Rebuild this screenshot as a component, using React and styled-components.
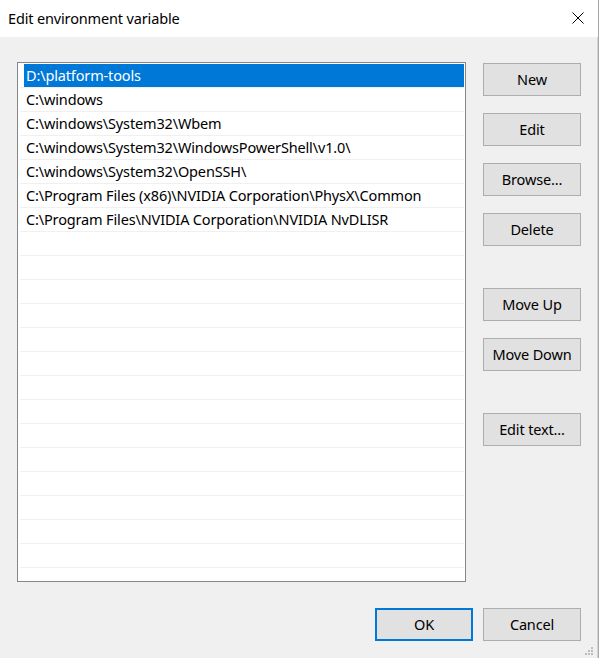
import React from 'react'
import styled, { createGlobalStyle } from 'styled-components'

const GlobalStyle = createGlobalStyle`
  html, body {
    margin: 0;
    padding: 0;
    background: #f0f0f0;
  }
  * { box-sizing: border-box; }
`

const Window = styled.div`
  position: relative;
  width: 599px;
  height: 658px;
  display: flex;
  flex-direction: column;
  background: #f0f0f0;
  border-right: 1px solid #a8a8a8;
  box-shadow: inset -1px 0 0 #d4d4d4;
  font-family: "Noto Sans", "Open Sans", sans-serif;
  font-size: 14.5px;
  letter-spacing: -0.15px;
  color: #000;
`

const TitleBar = styled.div`
  height: 37px;
  flex: none;
  display: flex;
  align-items: center;
  justify-content: space-between;
  background: #fff;
  padding: 0 14px 0 8px;
`

const Title = styled.span`
  margin-top: -2px;
`

const CloseIcon = styled.svg`
  width: 12px;
  height: 12px;
  margin-top: -1px;
`

const Body = styled.div`
  flex: 1;
  display: flex;
  flex-direction: column;
  padding: 25px 17px 18px 17px;
`

const Main = styled.div`
  display: flex;
  gap: 17px;
`

const List = styled.div`
  width: 449px;
  height: 520px;
  flex: none;
  background: #fff;
  border: 1px solid #828790;
  padding: 1px 1px 0 2px;
  overflow: hidden;
`

const Row = styled.div`
  height: 24px;
  border-bottom: 1px solid #f0f0f0;
  padding-left: 4px;
  display: flex;
`

const Cell = styled.div`
  flex: 1;
  height: 23px;
  line-height: 23px;
  padding-left: 2px;
  white-space: nowrap;
  background: ${p => (p.$selected ? '#0078d7' : 'transparent')};
  color: ${p => (p.$selected ? '#fff' : '#000')};
`

const Side = styled.div`
  display: flex;
  flex-direction: column;
  padding-top: 1px;
`

const Group = styled.div`
  display: flex;
  flex-direction: column;
  gap: 17px;
  margin-bottom: ${p => p.$after || 0}px;
`

const Button = styled.button`
  width: 98px;
  height: 33px;
  padding: 0;
  background: #e1e1e1;
  border: ${p => (p.$default ? '2px solid #0078d7' : '1px solid #adadad')};
  font-family: inherit;
  font-size: 14.5px;
  letter-spacing: -0.15px;
  color: #000;
  line-height: 1;
`

const Footer = styled.div`
  margin-top: 26px;
  display: flex;
  justify-content: flex-end;
  gap: 10px;
`

const Grip = styled.svg`
  position: absolute;
  right: 5px;
  bottom: 3px;
  width: 8px;
  height: 8px;
`

const paths = [
  'D:\\platform-tools',
  'C:\\windows',
  'C:\\windows\\System32\\Wbem',
  'C:\\windows\\System32\\WindowsPowerShell\\v1.0\\',
  'C:\\windows\\System32\\OpenSSH\\',
  'C:\\Program Files (x86)\\NVIDIA Corporation\\PhysX\\Common',
  'C:\\Program Files\\NVIDIA Corporation\\NVIDIA NvDLISR',
]

const rows = Array.from({ length: 22 }, (_, i) => paths[i] || '')

export default function App() {
  return (
    <>
      <GlobalStyle />
      <Window>
        <TitleBar>
          <Title>Edit environment variable</Title>
          <CloseIcon viewBox="0 0 12 12">
            <path d="M0.5 0.5 L11.5 11.5 M11.5 0.5 L0.5 11.5" stroke="#000" strokeWidth="1" fill="none" />
          </CloseIcon>
        </TitleBar>
        <Body>
          <Main>
            <List>
              {rows.map((text, i) => (
                <Row key={i}>
                  <Cell $selected={i === 0}>{text}</Cell>
                </Row>
              ))}
            </List>
            <Side>
              <Group $after={42}>
                <Button>New</Button>
                <Button>Edit</Button>
                <Button>Browse...</Button>
                <Button>Delete</Button>
              </Group>
              <Group $after={42}>
                <Button>Move Up</Button>
                <Button>Move Down</Button>
              </Group>
              <Group>
                <Button>Edit text...</Button>
              </Group>
            </Side>
          </Main>
          <Footer>
            <Button $default>OK</Button>
            <Button>Cancel</Button>
          </Footer>
        </Body>
        <Grip viewBox="0 0 8 8">
          <rect x="6" y="0" width="2" height="2" fill="#bdbdbd" />
          <rect x="3" y="3" width="2" height="2" fill="#bdbdbd" />
          <rect x="6" y="3" width="2" height="2" fill="#bdbdbd" />
          <rect x="0" y="6" width="2" height="2" fill="#bdbdbd" />
          <rect x="3" y="6" width="2" height="2" fill="#bdbdbd" />
          <rect x="6" y="6" width="2" height="2" fill="#bdbdbd" />
        </Grip>
      </Window>
    </>
  )
}
